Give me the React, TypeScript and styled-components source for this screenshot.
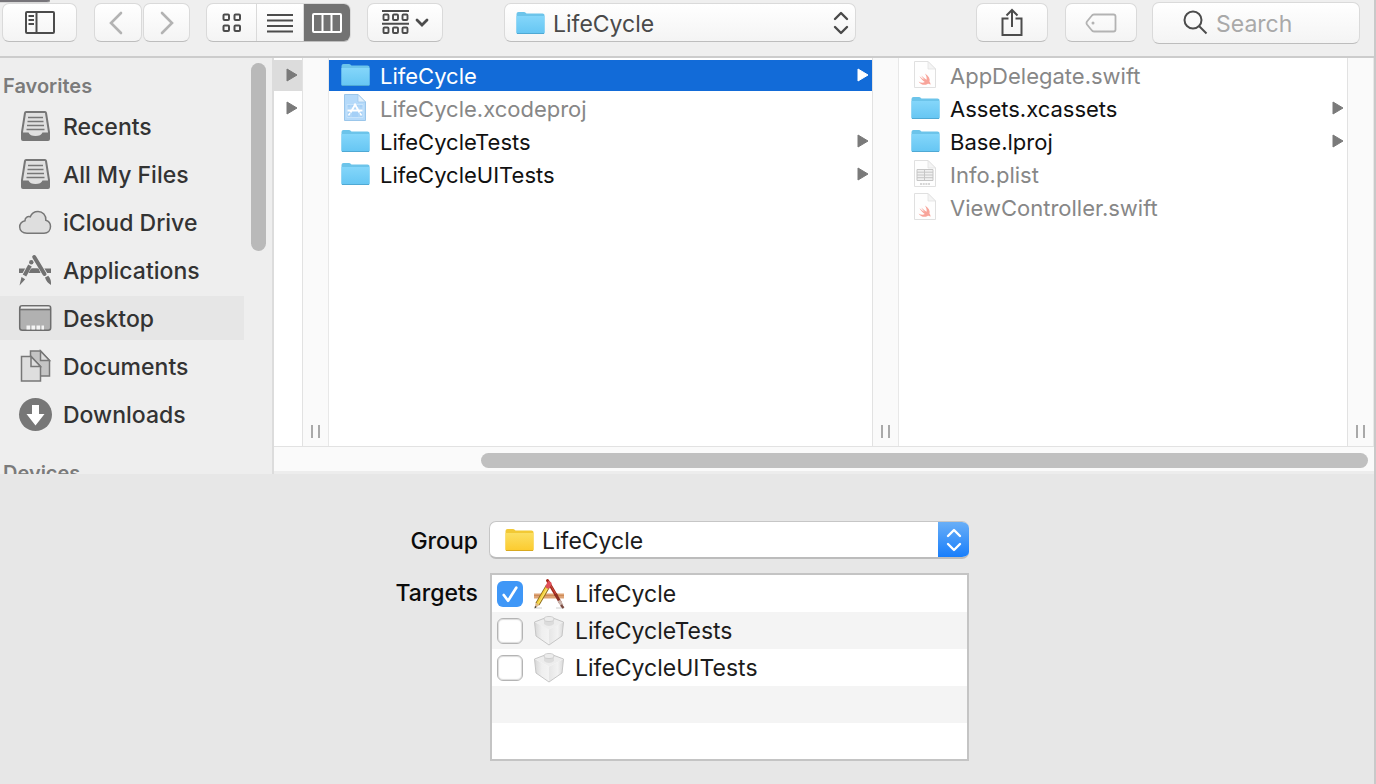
import React from "react";
import styled, { createGlobalStyle, css } from "styled-components";

const Global = createGlobalStyle`
  * { box-sizing: border-box; }
  html, body, #root { height: 100%; }
  body { margin: 0; background: #e7e7e7; font-family: Inter, "Liberation Sans", sans-serif; font-size: 23px; line-height: 28px; color: #1c1c1c; }
  button, input, select { font: inherit; color: inherit; margin: 0; }
  svg { display: block; flex: none; }
  ul { list-style: none; margin: 0; padding: 0; }
`;

const Dialog = styled.main`
  min-height: 100%;
  display: flex;
  flex-direction: column;
  border-right: 2px solid #c9c9c9;
  position: relative;
`;

const CornerTab = styled.div`
  position: absolute;
  top: 0;
  left: 0;
  width: 50px;
  height: 3px;
  background: #77757a;
  border-bottom: 1px solid #d8d8d8;
  border-right: 1px solid #8b8b8b;
  border-radius: 0 0 4px 0;
`;

const Toolbar = styled.header`
  display: flex;
  align-items: center;
  height: 58px;
  padding: 0 14px 11px 2px;
  background: #efefef;
  border-bottom: 2px solid #cccccc;
`;

const surface = css`
  border: 1px solid #dadada;
  border-bottom-color: #bdbdbd;
  border-radius: 7px;
  background: linear-gradient(#ffffff, #f4f4f4);
`;

const ToolButton = styled.button<{ $width: number; $after: number }>`
  ${surface}
  display: flex;
  align-items: center;
  justify-content: center;
  gap: 6px;
  flex: none;
  width: ${(p) => p.$width}px;
  height: 39px;
  padding: 0;
  margin-right: ${(p) => p.$after}px;
  color: #4c4c4c;
  &:disabled { color: #b3b3b3; }
`;

const Segments = styled.div`
  ${surface}
  display: flex;
  flex: none;
  width: 145px;
  height: 39px;
  margin-right: 16px;
  overflow: hidden;
`;

const Segment = styled.button<{ $active?: boolean }>`
  width: 47px;
  display: flex;
  align-items: center;
  justify-content: center;
  padding: 0;
  border: 0;
  border-left: 1px solid #dadada;
  background: ${(p) => (p.$active ? "#727272" : "transparent")};
  color: ${(p) => (p.$active ? "#ffffff" : "#4c4c4c")};
  &:first-child { border-left: 0; width: 49px; }
`;

const Spacer = styled.div<{ $grow: number }>`
  flex: ${(p) => p.$grow} 1 0;
`;

const PathPopup = styled.label`
  ${surface}
  display: flex;
  align-items: center;
  gap: 8px;
  width: 352px;
  height: 39px;
  padding: 0 6px 0 11px;
  color: #4a4a4a;
`;

const PlainSelect = styled.select`
  appearance: none;
  flex: 1;
  min-width: 0;
  height: 100%;
  padding: 2px 0 0;
  border: 0;
  background: transparent;
  outline: 0;
`;

const SearchField = styled.label`
  ${surface}
  display: flex;
  align-items: center;
  gap: 8px;
  width: 208px;
  height: 42px;
  padding-left: 30px;
  color: #4c4c4c;
  input {
    width: 140px;
    padding: 2px 0 0;
    border: 0;
    outline: 0;
    background: transparent;
  }
  input::placeholder { color: #a9a9a9; opacity: 1; }
`;

const Browser = styled.section`
  display: flex;
  height: 416px;
  background: #ededed;
`;

const Sidebar = styled.nav`
  display: flex;
  flex: none;
  width: 274px;
  background: #eeeeee;
  border-right: 2px solid #dcdcdc;
  overflow: hidden;
`;

const SidebarLists = styled.div`
  width: 244px;
`;

const SidebarHeading = styled.h2`
  margin: 0;
  padding: 14px 0 4px 3px;
  font-size: 20px;
  line-height: 28px;
  font-weight: 600;
  color: #7b7b7b;
`;

const Places = styled.ul`
  display: flex;
  flex-direction: column;
  gap: 4px;
  margin-bottom: 9px;
`;

const Place = styled.a<{ $active?: boolean }>`
  display: flex;
  align-items: center;
  gap: 11px;
  height: 44px;
  padding-left: 18px;
  color: #333333;
  font-weight: 500;
  text-decoration: none;
  background: ${(p) => (p.$active ? "#e6e6e6" : "transparent")};
`;

const PlaceName = styled.span`
  padding-top: 2px;
`;

const SidebarThumb = styled.div`
  width: 15px;
  height: 188px;
  margin: 5px 0 0 7px;
  border-radius: 8px;
  background: #b9b9b9;
`;

const ColumnArea = styled.div`
  flex: 1;
  min-width: 0;
  display: flex;
  flex-direction: column;
  margin-bottom: 3px;
  background: #ffffff;
`;

const Columns = styled.div`
  flex: 1;
  display: flex;
`;

const Column = styled.ul<{ $grow?: number; $slim?: boolean }>`
  flex: ${(p) => (p.$grow ? `${p.$grow} 1 0` : "none")};
  width: ${(p) => (p.$slim ? "28px" : "auto")};
  min-width: 0;
  display: flex;
  flex-direction: column;
  gap: 2px;
  padding-top: 2px;
`;

const FileRow = styled.li<{ $state?: "selected" | "path" | "dimmed" }>`
  display: flex;
  align-items: center;
  height: 31px;
  padding: 0 3px 2px 12px;
  font-size: 22px;
  white-space: nowrap;
  color: ${(p) => (p.$state === "selected" ? "#ffffff" : p.$state === "dimmed" ? "#878787" : "#111111")};
  background: ${(p) => (p.$state === "selected" ? "#126bd8" : p.$state === "path" ? "#dcdcdc" : "transparent")};
`;

const FileName = styled.span`
  flex: 1;
  margin-left: 10px;
  padding-top: 2px;
`;

const Divider = styled.div`
  flex: none;
  width: 27px;
  display: flex;
  align-items: flex-end;
  justify-content: center;
  gap: 5px;
  padding-bottom: 8px;
  background: #fafafa;
  border-left: 1px solid #e2e2e2;
  border-right: 1px solid #e8e8e8;
  &::before, &::after {
    content: "";
    width: 2px;
    height: 13px;
    background: #a9a9a9;
  }
`;

const ScrollTrack = styled.div`
  height: 25px;
  padding: 6px 6px 0 207px;
  background: #fafafa;
  border-top: 1px solid #e2e2e2;
`;

const ScrollThumb = styled.div`
  height: 15px;
  border-radius: 8px;
  background: #c0c0c0;
`;

const Options = styled.form`
  flex: 1;
  display: grid;
  grid-template-columns: 480px 480px;
  grid-template-rows: 38px 188px;
  row-gap: 14px;
  column-gap: 9px;
  padding: 47px 0 20px;
`;

const OptionLabel = styled.label`
  justify-self: end;
  padding: 6px 2px 0 0;
  color: #0b0b0b;
  font-weight: 500;
`;

const GroupPopup = styled.div`
  display: flex;
  align-items: center;
  gap: 8px;
  padding-left: 15px;
  border: 1px solid #c6c6c6;
  border-bottom: 2px solid #bcbcbc;
  border-right: 0;
  border-radius: 7px;
  background: #ffffff;
  overflow: hidden;
`;

const Stepper = styled.span`
  display: flex;
  align-items: center;
  justify-content: center;
  width: 31px;
  height: 38px;
  background: linear-gradient(#6bb0f7, #147bfb);
  color: #ffffff;
`;

const TargetList = styled.ul`
  margin-left: 1px;
  border: 2px solid #c4c4c4;
  background: #ffffff;
`;

const TargetRow = styled.li`
  height: 37px;
  padding-left: 5px;
  &:nth-child(even) { background: #f4f4f4; }
  label {
    display: flex;
    align-items: center;
    height: 37px;
  }
  label svg { margin: 0 10px 0 10px; }
`;

const Tick = styled.input`
  appearance: none;
  flex: none;
  width: 26px;
  height: 26px;
  border: 1px solid #b4b4b4;
  box-shadow: inset 0 0 1px 1px #dcdcdc;
  border-radius: 6px;
  background: #ffffff;
  &:checked {
    border: 0;
    box-shadow: none;
    background: #3f97f7 url("data:image/svg+xml,%3Csvg xmlns='http://www.w3.org/2000/svg' viewBox='0 0 27 27'%3E%3Cpath d='M7 14.5l4.5 6L20 7' fill='none' stroke='white' stroke-width='2.8' stroke-linecap='round' stroke-linejoin='round'/%3E%3C/svg%3E");
  }
`;

const Folder = ({ yellow }: { yellow?: boolean }) => {
  const id = yellow ? "folder-yellow" : "folder-blue";
  const tones = yellow ? ["#fbdf62", "#fccb2e", "#d8a91f", "#f2c935"] : ["#84d6fa", "#66c6f3", "#4fa9d4", "#6cc4ea"];
  return (
    <svg width="29" height="24" viewBox="0 0 29 24" aria-hidden="true">
      <defs>
        <linearGradient id={id} x1="0" y1="0" x2="0" y2="1">
          <stop offset="0" stopColor={tones[0]} />
          <stop offset="1" stopColor={tones[1]} />
        </linearGradient>
      </defs>
      <path d="M.5 3Q.5 1 2.5 1H8Q9 1 9.700 1.800L10.500 2.500H26.500Q28.500 2.500 28.500 4V21.500Q28.500 23 27 23H2Q.5 23 .5 21.500Z" fill={tones[3]} />
      <path d="M.5 5H28.500V21.500Q28.500 22.500 27.500 22.500H1.500Q.5 22.500 .5 21.500Z" fill={`url(#${id})`} />
      <path d="M1 22.500H28" stroke={tones[2]} />
    </svg>
  );
};

const page = "M3.500 1.500H17L24.500 9V27.500H3.500Z";
const pageFold = "M17 1.500V9h7.500Z";

const ProjectIcon = () => (
  <svg width="29" height="29" viewBox="0 0 29 29" aria-hidden="true">
    <path d={page} fill="#b5dafa" stroke="#9bc6ea" />
    <path d={pageFold} fill="#e3f1fd" stroke="#9bc6ea" strokeWidth=".7" />
    <path d="M6 11.500H22V24.500H6Z" fill="#a5d0f7" stroke="#cfe7fb" strokeWidth=".8" />
    <path d="M6 15H22M10 11.500V24.500M18 11.500V24.500" stroke="#c3e0f9" strokeWidth=".6" />
    <path d="M13.500 10.500L18.500 19.500M14.500 11L9.500 19.500M6.500 17.500H21.500" stroke="#fff" strokeWidth="1.900" fill="none" />
    <path d="M9 20L7.500 22.500M19 20L20.500 22.500" stroke="#fff" strokeWidth="1.500" />
  </svg>
);

const SwiftIcon = () => (
  <svg width="29" height="29" viewBox="0 0 29 29" aria-hidden="true">
    <path d={page} fill="#fefefe" stroke="#e0e0e0" />
    <path d={pageFold} fill="#f4f4f4" stroke="#e0e0e0" strokeWidth=".7" />
    <path transform="translate(-1 1)" d="M15 12.500c3.800 2.500 5.400 5.600 4.500 8.200 1 1.100 1.200 2.300.8 3-1-1.100-2.100-1.100-3.200-.5-3 1.400-6.500.3-8.600-2.800 2.300 1.400 4.700 1.600 6.300.6-2.300-1.700-4.200-4-5.400-5.800 1.900 1.500 3.800 3 5.300 3.800-1.200-1.200-2.700-3.200-3.500-4.400 2 1.800 4 3.500 5.400 4.200.300-2-.2-4-1.600-6.300Z" fill="#f8a49a" />
  </svg>
);

const PlistIcon = () => (
  <svg width="29" height="29" viewBox="0 0 29 29" aria-hidden="true">
    <path d={page} fill="#fefefe" stroke="#e0e0e0" />
    <path d={pageFold} fill="#f4f4f4" stroke="#e0e0e0" strokeWidth=".7" />
    <path d="M6 10.500H22V21.500H6ZM6 13.200H22M6 16H22M6 18.700H22M13.500 10.500V21.500" stroke="#c6c6c6" fill="#f0f0f0" />
    <path d="M9 25H19" stroke="#d6d6d6" strokeWidth="2" strokeDasharray="2 .7" />
  </svg>
);

const Arrow = ({ light }: { light?: boolean }) => (
  <svg width="12" height="14" viewBox="0 0 12 14" aria-hidden="true">
    <path d="M1 1L11 7L1 13Z" fill={light ? "#fff" : "#7a7a7a"} stroke={light ? "#fff" : "#7a7a7a"} strokeLinejoin="round" />
  </svg>
);

const UpDown = () => (
  <svg width="16" height="24" viewBox="0 0 16 24" fill="none" stroke="currentColor" strokeWidth="2.400" strokeLinecap="round" strokeLinejoin="round" aria-hidden="true">
    <path d="M2 8L8 2L14 8M2 16L8 22L14 16" />
  </svg>
);

const TrayIcon = () => (
  <svg width="34" height="34" viewBox="0 0 34 34" aria-hidden="true">
    <path d="M8 3H27Q27.800 3 28 4L31 23V30Q31 31 30 31H5Q4 31 4 30V23L7 4Q7.200 3 8 3Z" fill="#e0e0e0" stroke="#777" strokeWidth="2" />
    <path d="M4 23.500H10.500Q12 27 17.500 27Q23 27 24.500 23.500H31V30Q31 31 30 31H5Q4 31 4 30Z" fill="#777" />
    <path d="M10 8.500H25M9.500 12.500H25.500M9 16.500H26M8.500 20.500H26.500" stroke="#777" strokeWidth="1.600" />
  </svg>
);

const CloudIcon = () => (
  <svg width="34" height="34" viewBox="0 0 34 34" aria-hidden="true">
    <path d="M9 28.200C4.500 28.200 1.700 25.500 1.700 22C1.700 18.800 3.800 16.500 7 15.700C6.800 12.800 9.500 10.800 12.300 11.800C13.500 8.500 16.500 6.500 20 6.500C24.800 6.500 28.200 10.500 27.800 15.200C30.800 16 32.500 18.500 32.500 21.600C32.500 25.500 29.800 28.200 26 28.200Z" fill="#dedede" stroke="#777" strokeWidth="1.500" />
  </svg>
);

const AppsIcon = () => (
  <svg width="34" height="34" viewBox="0 0 34 34" aria-hidden="true">
    <path d="M1 15.500H33V20H1Z" fill="#727272" />
    <path d="M15 2L31 29M16 6L3 29" stroke="#eee" strokeWidth="6" />
    <path d="M13 15.500H20.500L22.500 20H10.500Z" fill="#727272" />
    <path d="M16.200 4L26.500 21" stroke="#727272" strokeWidth="4" strokeLinecap="round" />
    <path d="M27 24.500L30.300 22.800Q33.500 26.500 33 32Q28.500 29.500 27 24.500Z" fill="#727272" />
    <circle cx="13.300" cy="9.300" r="2.200" fill="#727272" />
    <path d="M12 12.500L6.500 22.500" stroke="#727272" strokeWidth="4" />
    <path d="M3.500 24L7.200 26.200L1.500 32.500Z" fill="#727272" />
  </svg>
);

const DesktopIcon = () => (
  <svg width="34" height="34" viewBox="0 0 34 34" aria-hidden="true">
    <rect x="1.700" y="4.700" width="31" height="24.500" rx="2.500" fill="#b1b1b1" stroke="#6d6d6d" strokeWidth="1.500" />
    <path d="M3 6.500H31.500" stroke="#eee" strokeWidth="1.800" />
    <path d="M2 8.700H32.500" stroke="#6d6d6d" strokeWidth="1.200" />
    <path d="M8.500 26.500H26" stroke="#f4f4f4" strokeWidth="4" strokeDasharray="3.600 1.400" />
  </svg>
);

const DocumentsIcon = () => (
  <svg width="34" height="34" viewBox="0 0 34 34" fill="#dedede" stroke="#777" strokeWidth="1.500" aria-hidden="true">
    <path d="M12.500 2H22.500L31.500 11.500V27H12.500Z" fill="#c4c4c4" />
    <path d="M22.500 2V11.500H31.500Z" />
    <path d="M3.500 7.500H13L22.500 17.500V32H3.500Z" />
    <path d="M13 7.500V17.500H22.500Z" />
  </svg>
);

const DownloadsIcon = () => (
  <svg width="34" height="34" viewBox="0 0 34 34" aria-hidden="true">
    <circle cx="17.500" cy="17.500" r="16.500" fill="#777" />
    <path d="M14 8H21V17H26.500L17.500 28.500L8.500 17H14Z" fill="#fff" />
  </svg>
);

const AppTargetIcon = () => (
  <svg width="32" height="32" viewBox="0 0 32 32" aria-hidden="true">
    <path d="M1 15.500H31V20.500H1Z" fill="#dea375" />
    <path d="M1 17.500H31" stroke="#c98552" strokeWidth=".8" />
    <path d="M2 30H9M23 30H31" stroke="#cfcfcf" strokeWidth="1.200" />
    <path d="M14.500 2.500L23 17" stroke="#a5261a" strokeWidth="3" strokeLinecap="round" />
    <path d="M15.200 3L23 16.500" stroke="#d2594a" strokeWidth=".8" />
    <path d="M22.500 16L27.500 25" stroke="#8c2f22" strokeWidth="3" />
    <path d="M26 22.500L29 27.500" stroke="#c9b3ab" strokeWidth="3.200" />
    <path d="M28 27L30.500 30" stroke="#7a4a40" strokeWidth="2.400" />
    <path d="M15 8L4.500 26" stroke="#86661a" strokeWidth="4.600" />
    <path d="M15 8L4.500 26" stroke="#f4d03c" strokeWidth="3" />
    <path d="M15.600 8.200L5.500 25.600" stroke="#fbe98a" strokeWidth=".8" />
    <path d="M16.300 5.700L14.800 8.300" stroke="#e0505a" strokeWidth="4.600" strokeLinecap="round" />
    <path d="M2.600 24.800L6.500 27L1.500 30.500Z" fill="#dcb98e" />
    <path d="M1.500 30.500L2 28L3.700 29Z" fill="#333" />
  </svg>
);

const BrickIcon = () => (
  <svg width="32" height="32" viewBox="0 0 32 32" aria-hidden="true">
    <defs>
      <linearGradient id="brick-left" x1="0" y1="0" x2="1" y2="0">
        <stop offset="0" stopColor="#d6d6d6" />
        <stop offset=".5" stopColor="#efefef" />
        <stop offset="1" stopColor="#f3f3f3" />
      </linearGradient>
      <linearGradient id="brick-right" x1="0" y1="0" x2="1" y2="0">
        <stop offset="0" stopColor="#e6e6e6" />
        <stop offset=".6" stopColor="#f2f2f2" />
        <stop offset="1" stopColor="#d9d9d9" />
      </linearGradient>
    </defs>
    <path d="M1.500 7L16 14.500V30L3 21Z" fill="url(#brick-left)" />
    <path d="M30.500 7L16 14.500V30L29 21Z" fill="url(#brick-right)" />
    <path d="M1.500 7L16 1.500L30.500 7L16 14.500Z" fill="#ededed" />
    <path d="M1.500 7L16 1.500L30.500 7L29 21L16 30L3 21Z" fill="none" stroke="#c6c6c6" strokeLinejoin="round" />
    <path d="M11 4V9Q16 13 21 9V4Z" fill="#dcdcdc" />
    <ellipse cx="16" cy="4" rx="5" ry="2.500" fill="#ececec" stroke="#c9c9c9" strokeWidth=".8" />
  </svg>
);

const places = [
  { name: "Recents", icon: <TrayIcon /> },
  { name: "All My Files", icon: <TrayIcon /> },
  { name: "iCloud Drive", icon: <CloudIcon /> },
  { name: "Applications", icon: <AppsIcon /> },
  { name: "Desktop", icon: <DesktopIcon />, active: true },
  { name: "Documents", icon: <DocumentsIcon /> },
  { name: "Downloads", icon: <DownloadsIcon /> },
];

type Entry = { name: string; icon: React.ReactNode; state?: "selected" | "dimmed"; folder?: boolean };

const projectFiles: Entry[] = [
  { name: "LifeCycle", icon: <Folder />, state: "selected", folder: true },
  { name: "LifeCycle.xcodeproj", icon: <ProjectIcon />, state: "dimmed" },
  { name: "LifeCycleTests", icon: <Folder />, folder: true },
  { name: "LifeCycleUITests", icon: <Folder />, folder: true },
];

const sourceFiles: Entry[] = [
  { name: "AppDelegate.swift", icon: <SwiftIcon />, state: "dimmed" },
  { name: "Assets.xcassets", icon: <Folder />, folder: true },
  { name: "Base.lproj", icon: <Folder />, folder: true },
  { name: "Info.plist", icon: <PlistIcon />, state: "dimmed" },
  { name: "ViewController.swift", icon: <SwiftIcon />, state: "dimmed" },
];

const FileColumn = ({ entries, grow }: { entries: Entry[]; grow: number }) => (
  <Column $grow={grow}>
    {entries.map((e) => (
      <FileRow key={e.name} $state={e.state}>
        {e.icon}
        <FileName>{e.name}</FileName>
        {e.folder && <Arrow light={e.state === "selected"} />}
      </FileRow>
    ))}
  </Column>
);

export default function App() {
  return (
    <Dialog>
      <Global />
      <CornerTab />
      <Toolbar>
        <ToolButton $width={75} $after={17} aria-label="Toggle sidebar">
          <svg width="30" height="23" viewBox="0 0 30 23" fill="none" stroke="currentColor" strokeWidth="2">
            <rect x="1" y="1" width="28" height="21" rx="1" />
            <path d="M11.500 1V22M3.500 5H9M3.500 9H9M3.500 13H9" />
          </svg>
        </ToolButton>
        <ToolButton $width={48} $after={1} disabled aria-label="Back">
          <svg width="18" height="24" viewBox="0 0 18 24" fill="none" stroke="currentColor" strokeWidth="2.600" strokeLinecap="round"><path d="M12 2L2 12L12 22" /></svg>
        </ToolButton>
        <ToolButton $width={47} $after={16} disabled aria-label="Forward">
          <svg width="14" height="24" viewBox="0 0 14 24" fill="none" stroke="currentColor" strokeWidth="2.600" strokeLinecap="round"><path d="M2 2L12 12L2 22" /></svg>
        </ToolButton>
        <Segments>
          <Segment aria-label="Icon view">
            <svg width="20" height="20" viewBox="0 0 20 20" fill="none" stroke="currentColor" strokeWidth="2">
              <rect x="1.500" y="1.500" width="5.500" height="5.500" rx="1" /><rect x="12.500" y="1.500" width="5.500" height="5.500" rx="1" />
              <rect x="1.500" y="12.500" width="5.500" height="5.500" rx="1" /><rect x="12.500" y="12.500" width="5.500" height="5.500" rx="1" />
            </svg>
          </Segment>
          <Segment aria-label="List view">
            <svg width="26" height="20" viewBox="0 0 26 20" stroke="currentColor" strokeWidth="2"><path d="M0 2H26M0 7.500H26M0 13H26M0 18.500H26" /></svg>
          </Segment>
          <Segment $active aria-label="Column view">
            <svg width="30" height="20" viewBox="0 0 30 20" fill="none" stroke="currentColor" strokeWidth="2"><rect x="1" y="1" width="28" height="18" rx="1" /><path d="M10.500 1V19M19.500 1V19" /></svg>
          </Segment>
        </Segments>
        <ToolButton $width={76} $after={0} aria-label="Arrange items">
          <svg width="27" height="25" viewBox="0 0 27 25" fill="none" stroke="currentColor" strokeWidth="1.900">
            <path d="M0 1H27M0 13.800H27" />
            <rect x="1.500" y="4.500" width="5" height="5.500" rx="1" /><rect x="11" y="4.500" width="5" height="5.500" rx="1" /><rect x="20.500" y="4.500" width="5" height="5.500" rx="1" />
            <rect x="1.500" y="17.500" width="5" height="5.500" rx="1" /><rect x="11" y="17.500" width="5" height="5.500" rx="1" /><rect x="20.500" y="17.500" width="5" height="5.500" rx="1" />
          </svg>
          <svg width="14" height="9" viewBox="0 0 14 9" fill="none" stroke="currentColor" strokeWidth="2.800" strokeLinecap="round"><path d="M2 2L7 7L12 2" /></svg>
        </ToolButton>
        <Spacer $grow={61} />
        <PathPopup>
          <Folder />
          <PlainSelect aria-label="Current folder"><option>LifeCycle</option></PlainSelect>
          <UpDown />
        </PathPopup>
        <Spacer $grow={120} />
        <ToolButton $width={72} $after={17} aria-label="Share">
          <svg width="22" height="29" viewBox="0 0 22 29" fill="none" stroke="currentColor" strokeWidth="2">
            <path d="M7.500 10.500H1.500V27H20.500V10.500H14.500M11 19V2M5.500 7.500L11 2L16.500 7.500" />
          </svg>
        </ToolButton>
        <ToolButton $width={72} $after={15} disabled aria-label="Tags">
          <svg width="32" height="20" viewBox="0 0 32 20" fill="none" stroke="currentColor" strokeWidth="1.800">
            <path d="M9 1.500H28.500Q30.500 1.500 30.500 3.500V16.500Q30.500 18.500 28.500 18.500H9Q7.500 18.500 6.500 17L2 11.500Q1 10 2 8.500L6.500 3Q7.500 1.500 9 1.500Z" />
            <circle cx="8" cy="10" r="1.500" fill="currentColor" stroke="none" />
          </svg>
        </ToolButton>
        <SearchField>
          <svg width="25" height="25" viewBox="0 0 25 25" fill="none" stroke="currentColor" strokeWidth="2"><circle cx="10" cy="10" r="8.500" /><path d="M16 16L23.500 23.500" /></svg>
          <input type="search" placeholder="Search" aria-label="Search" />
        </SearchField>
      </Toolbar>

      <Browser>
        <Sidebar>
          <SidebarLists>
            <SidebarHeading>Favorites</SidebarHeading>
            <Places>
              {places.map((p) => (
                <li key={p.name}>
                  <Place href="#" $active={p.active}>{p.icon}<PlaceName>{p.name}</PlaceName></Place>
                </li>
              ))}
            </Places>
            <SidebarHeading>Devices</SidebarHeading>
          </SidebarLists>
          <SidebarThumb />
        </Sidebar>
        <ColumnArea>
          <Columns>
            <Column $slim>
              <FileRow $state="path"><Arrow /></FileRow>
              <FileRow><Arrow /></FileRow>
            </Column>
            <Divider />
            <FileColumn entries={projectFiles} grow={543} />
            <Divider />
            <FileColumn entries={sourceFiles} grow={448} />
            <Divider />
          </Columns>
          <ScrollTrack><ScrollThumb /></ScrollTrack>
        </ColumnArea>
      </Browser>

      <Options>
        <OptionLabel htmlFor="group">Group</OptionLabel>
        <GroupPopup>
          <Folder yellow />
          <PlainSelect id="group"><option>LifeCycle</option></PlainSelect>
          <Stepper><UpDown /></Stepper>
        </GroupPopup>
        <OptionLabel as="span">Targets</OptionLabel>
        <TargetList aria-label="Targets">
          <TargetRow><label><Tick type="checkbox" defaultChecked /><AppTargetIcon />LifeCycle</label></TargetRow>
          <TargetRow><label><Tick type="checkbox" /><BrickIcon />LifeCycleTests</label></TargetRow>
          <TargetRow><label><Tick type="checkbox" /><BrickIcon />LifeCycleUITests</label></TargetRow>
          <TargetRow />
          <TargetRow />
        </TargetList>
      </Options>
    </Dialog>
  );
}
